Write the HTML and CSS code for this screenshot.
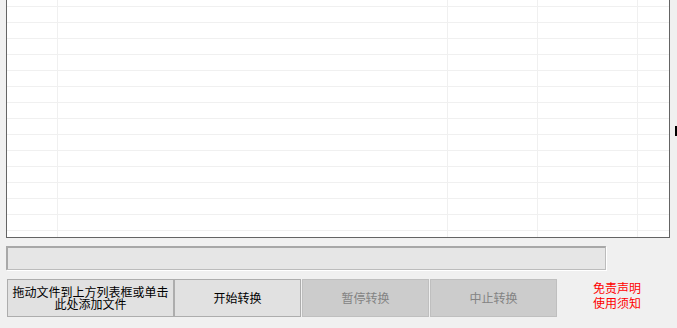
FILE: index.html
```html
<!DOCTYPE html>
<html lang="zh-CN">
<head>
<meta charset="utf-8">
<title>转换工具</title>
<link rel="stylesheet" href="styles.css">
</head>
<body>
<div class="app">
  <div class="listview">
    <div class="row first"><span></span><span></span><span></span><span></span><span></span></div>
    <div class="row"><span></span><span></span><span></span><span></span><span></span></div>
    <div class="row"><span></span><span></span><span></span><span></span><span></span></div>
    <div class="row"><span></span><span></span><span></span><span></span><span></span></div>
    <div class="row"><span></span><span></span><span></span><span></span><span></span></div>
    <div class="row"><span></span><span></span><span></span><span></span><span></span></div>
    <div class="row"><span></span><span></span><span></span><span></span><span></span></div>
    <div class="row"><span></span><span></span><span></span><span></span><span></span></div>
    <div class="row"><span></span><span></span><span></span><span></span><span></span></div>
    <div class="row"><span></span><span></span><span></span><span></span><span></span></div>
    <div class="row"><span></span><span></span><span></span><span></span><span></span></div>
    <div class="row"><span></span><span></span><span></span><span></span><span></span></div>
    <div class="row"><span></span><span></span><span></span><span></span><span></span></div>
    <div class="row"><span></span><span></span><span></span><span></span><span></span></div>
    <div class="row"><span></span><span></span><span></span><span></span><span></span></div>
    <div class="row last"><span></span><span></span><span></span><span></span><span></span></div>
  </div>
  <div class="progress"></div>
  <div class="actions">
    <button class="btn wide"><span class="line">拖动文件到上方列表框或单击</span><span class="line">此处添加文件</span></button>
    <button class="btn">开始转换</button>
    <button class="btn disabled">暂停转换</button>
    <button class="btn disabled">中止转换</button>
    <div class="links">
      <span class="link">免责声明</span>
      <span class="link">使用须知</span>
    </div>
  </div>
  <div class="edge-mark"></div>
</div>
</body>
</html>
```

FILE: styles.css
```css
* { box-sizing: border-box; }
html, body {
  margin: 0;
  padding: 0;
  width: 677px;
  height: 328px;
  overflow: hidden;
  background: #f0f0f0;
  font-family: "Noto Sans CJK SC", "Microsoft YaHei", sans-serif;
  font-size: 12px;
}
.app {
  position: relative;
  padding-left: 6px;
  height: 328px;
}
.listview {
  width: 664px;
  height: 238px;
  background: #ffffff;
  border-left: 1px solid #646464;
  border-right: 1px solid #646464;
  border-bottom: 1px solid #646464;
  display: flex;
  flex-direction: column;
  overflow: hidden;
}
.row {
  display: grid;
  grid-template-columns: 51px 390px 90px 100px 1fr;
  height: 16px;
  flex: none;
  border-bottom: 1px solid #f0f0f0;
}
.row.first { height: 7px; }
.row.last { height: 6px; border-bottom: none; }
.row span { border-right: 1px solid #f0f0f0; }
.row span:last-child { border-right: none; }
.progress {
  margin-top: 8px;
  width: 600px;
  height: 24px;
  background: #e6e6e6;
  border-top: 2px solid #a8a8a8;
  border-left: 2px solid #a8a8a8;
  border-right: 1px solid #bcbcbc;
  border-bottom: 1px solid #bcbcbc;
  box-shadow: 1px 1px 0 #ffffff;
}
.actions {
  margin-top: 9px;
  margin-left: 1px;
  display: flex;
  align-items: flex-start;
}
.btn {
  height: 38px;
  width: 127px;
  margin: 0 1px 0 0;
  padding: 0;
  background: #e1e1e1;
  border: 1px solid #adadad;
  border-radius: 0;
  color: #000000;
  font-family: "Noto Sans CJK SC", "Microsoft YaHei", sans-serif;
  font-size: 12px;
  line-height: 12px;
  text-align: center;
}
.btn.wide {
  width: 167px;
  margin-right: 0;
  display: flex;
  flex-direction: column;
  align-items: center;
  justify-content: center;
  gap: 0;
}
.line {
  display: block;
  height: 12px;
  line-height: 12px;
  font-size: 12px;
}
.btn.disabled {
  background: #cccccc;
  border-color: #bfbfbf;
  color: #838383;
}
.links {
  margin-left: 35px;
  padding-top: 3px;
  display: flex;
  flex-direction: column;
  gap: 3px;
  color: #ff0000;
}
.link {
  display: block;
  height: 12px;
  line-height: 12px;
}
.edge-mark {
  position: absolute;
  left: 675px;
  top: 126px;
  width: 2px;
  height: 10px;
  background: #000000;
}
```
